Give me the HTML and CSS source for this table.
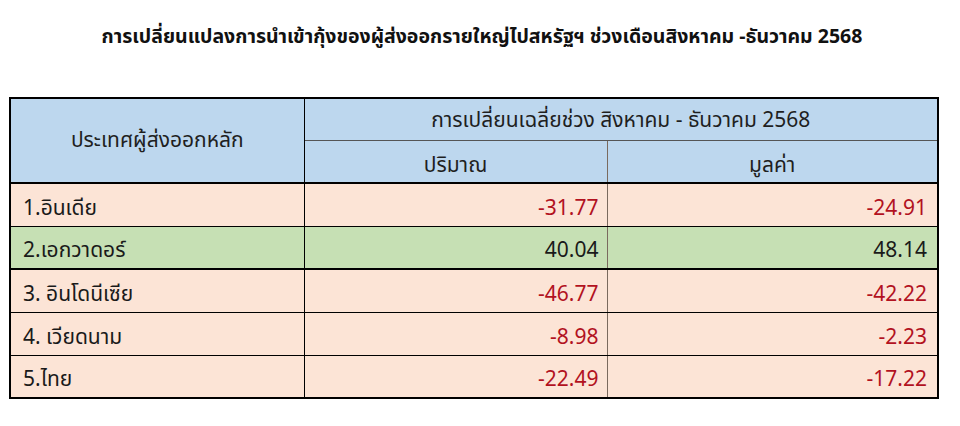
FILE: index.html
```html
<!DOCTYPE html>
<html lang="th">
<head>
<meta charset="utf-8">
<link rel="stylesheet" href="styles.css">
</head>
<body>
<div class="page">
  <h1 class="title">การเปลี่ยนแปลงการนำเข้ากุ้งของผู้ส่งออกรายใหญ่ไปสหรัฐฯ ช่วงเดือนสิงหาคม -ธันวาคม 2568</h1>
  <table class="data">
    <colgroup>
      <col class="c1"><col class="c2"><col class="c3">
    </colgroup>
    <thead>
      <tr class="h1">
        <th rowspan="2" class="country-head">ประเทศผู้ส่งออกหลัก</th>
        <th colspan="2" class="span-head">การเปลี่ยนเฉลี่ยช่วง สิงหาคม - ธันวาคม 2568</th>
      </tr>
      <tr class="h2">
        <th class="sub sub-left">ปริมาณ</th>
        <th class="sub">มูลค่า</th>
      </tr>
    </thead>
    <tbody>
      <tr class="peach">
        <td class="name">1.อินเดีย</td><td class="num neg mid">-31.77</td><td class="num neg">-24.91</td>
      </tr>
      <tr class="green thick">
        <td class="name">2.เอกวาดอร์</td><td class="num mid">40.04</td><td class="num">48.14</td>
      </tr>
      <tr class="peach">
        <td class="name">3. อินโดนีเซีย</td><td class="num neg mid">-46.77</td><td class="num neg">-42.22</td>
      </tr>
      <tr class="peach">
        <td class="name">4. เวียดนาม</td><td class="num neg mid">-8.98</td><td class="num neg">-2.23</td>
      </tr>
      <tr class="peach">
        <td class="name">5.ไทย</td><td class="num neg mid">-22.49</td><td class="num neg">-17.22</td>
      </tr>
    </tbody>
  </table>
</div>
</body>
</html>
```

FILE: styles.css
```css
html, body {
  margin: 0;
  padding: 0;
  background: #ffffff;
}
body {
  font-family: "Noto Sans Thai", "Noto Sans", "DejaVu Sans", sans-serif;
  color: #1a1a1a;
}
.page {
  width: 960px;
  height: 426px;
  padding: 24px 0 0 9px;
  box-sizing: border-box;
}
.title {
  margin: 0 0 47px 0;
  width: 928px;
  padding-left: 18px;
  box-sizing: border-box;
  text-align: center;
  font-size: 19.5px;
  font-weight: bold;
  line-height: 26px;
  color: #111;
}
.data {
  border-collapse: collapse;
  table-layout: fixed;
  width: 928px;
  border: 2px solid #000;
  font-size: 21px;
}
.c1 { width: 294px; }
.c2 { width: 303px; }
.c3 { width: 331px; }
th {
  font-weight: normal;
  background: #bdd7ee;
  color: #1f1f1f;
  padding: 0;
  line-height: 28px;
}
.country-head {
  border-right: 1px solid #000;
  border-bottom: 2px solid #000;
  height: 83px;
}
.span-head {
  height: 41px;
  border-bottom: 1px solid #555;
  vertical-align: bottom;
  padding-bottom: 5px;
  box-sizing: border-box;
}
.h2 th {
  height: 41px;
  border-bottom: 2px solid #000;
  vertical-align: bottom;
  padding-bottom: 2px;
  box-sizing: border-box;
}
.sub-left {
  border-right: 1px solid #7a6a5e;
}
td {
  height: 43px;
  box-sizing: border-box;
  vertical-align: bottom;
  padding: 0 0 3px 0;
  line-height: 28px;
  border-bottom: 1px solid #000;
}
.peach td { background: #fce4d6; }
.green td { background: #c6e0b4; }
.thick td { border-bottom: 2px solid #000; }
.name {
  padding-left: 12px;
  border-right: 1px solid #000;
}
.num {
  text-align: right;
  padding-right: 10px;
}
.mid {
  border-right: 1px solid #7a6a5e;
  padding-right: 8px;
}
.neg { color: #b2121f; }
```
